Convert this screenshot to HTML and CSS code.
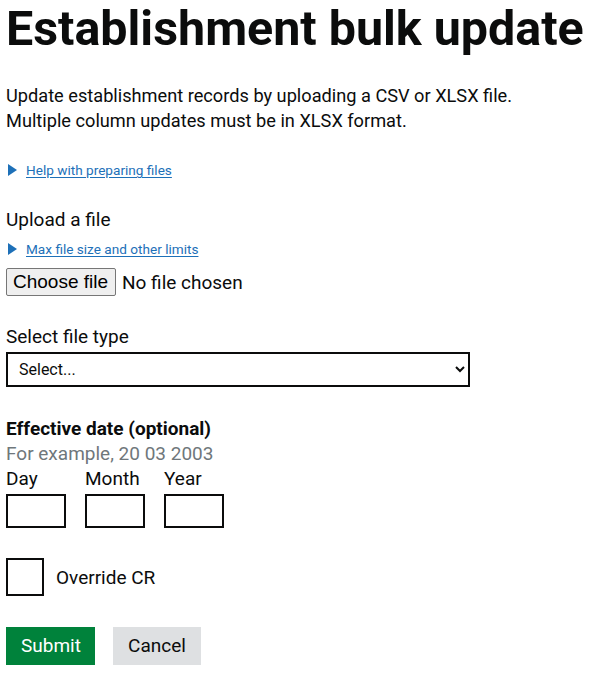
FILE: index.html
```html
<!DOCTYPE html>
<html lang="en">
<head>
<meta charset="utf-8">
<title>Establishment bulk update</title>
<link rel="stylesheet" href="styles.css">
</head>
<body>
<main class="page">
  <h1 class="heading">Establishment bulk update</h1>
  <p class="intro">Update establishment records by uploading a CSV or XLSX file.<br>Multiple column updates must be in XLSX format.</p>

  <details class="details details-help">
    <summary class="summary"><span class="summary-text">Help with preparing files</span></summary>
  </details>

  <div class="group group-upload">
    <div class="label">Upload a file</div>
    <details class="details details-limits">
      <summary class="summary"><span class="summary-text">Max file size and other limits</span></summary>
    </details>
    <div class="file">
      <input class="file-input" id="file" type="file" hidden>
      <label class="file-button" for="file">Choose file</label>
      <span class="file-status">No file chosen</span>
    </div>
  </div>

  <div class="group group-type">
    <label class="label" for="type">Select file type</label>
    <select class="select" id="type">
      <option>Select...</option>
    </select>
  </div>

  <fieldset class="fieldset">
    <legend class="legend">Effective date (optional)</legend>
    <div class="hint">For example, 20 03 2003</div>
    <div class="date">
      <div class="date-item">
        <label class="label" for="day">Day</label>
        <input class="input" id="day" type="text">
      </div>
      <div class="date-item">
        <label class="label" for="month">Month</label>
        <input class="input" id="month" type="text">
      </div>
      <div class="date-item">
        <label class="label" for="year">Year</label>
        <input class="input" id="year" type="text">
      </div>
    </div>
  </fieldset>

  <div class="checkbox-row">
    <input class="checkbox" id="override" type="checkbox">
    <label class="checkbox-label" for="override">Override CR</label>
  </div>

  <div class="actions">
    <button class="button button-primary" type="submit">Submit</button>
    <button class="button button-secondary" type="button">Cancel</button>
  </div>
</main>
</body>
</html>
```
FILE: styles.css
```css
html, body {
  margin: 0;
  padding: 0;
  background: #ffffff;
}

.page {
  padding: 4px 6px 0;
  font-family: Roboto, "Liberation Sans", Arial, sans-serif;
  color: #0b0c0c;
}

.heading {
  margin: 0 0 29px;
  font-size: 48.4px;
  line-height: 50px;
  font-weight: 700;
}

.intro {
  margin: 0 0 27px;
  font-size: 18.2px;
  line-height: 25px;
}

.details {
  margin: 0;
}

.summary {
  display: block;
  list-style: none;
  position: relative;
  padding-left: 20px;
  font-size: 13.6px;
  line-height: 20px;
  color: #1d70b8;
  cursor: pointer;
}

.summary::-webkit-details-marker {
  display: none;
}

.summary::before {
  content: "";
  position: absolute;
  left: 2px;
  top: 4px;
  width: 0;
  height: 0;
  border-style: solid;
  border-color: transparent;
  border-left-color: #1d70b8;
  border-width: 6px 0 6px 9px;
}

.summary-text {
  text-decoration: underline;
  text-underline-offset: 2px;
}

.group-upload {
  margin-top: 27px;
}

.label {
  display: block;
  font-size: 19px;
  line-height: 25px;
}

.details-limits {
  margin-top: 7px;
}

.file {
  display: flex;
  align-items: center;
  gap: 6px;
  margin-top: 9px;
  height: 28px;
}

.file-button {
  box-sizing: border-box;
  display: flex;
  align-items: center;
  width: 110px;
  height: 28px;
  padding: 0 6px;
  font-family: "Liberation Sans", Arial, sans-serif;
  font-size: 19px;
  color: #000000;
  background: #efefef;
  border: 1px solid #767676;
  border-radius: 2px;
  cursor: pointer;
}

.file-status {
  font-size: 19px;
  line-height: 25px;
}

.group-type {
  margin-top: 28px;
}

.select {
  display: block;
  margin-top: 3px;
  width: 464px;
  height: 35px;
  padding: 0 4px 0 7px;
  font-family: Roboto, "Liberation Sans", Arial, sans-serif;
  font-size: 16px;
  color: #0b0c0c;
  background: #ffffff;
  border: 2px solid #0b0c0c;
  border-radius: 0;
}

.fieldset {
  margin: 29px 0 0;
  padding: 0;
  border: 0;
  min-width: 0;
}

.legend {
  padding: 0;
  font-size: 19px;
  line-height: 25px;
  font-weight: 700;
}

.hint {
  font-size: 19px;
  line-height: 25px;
  color: #6f777b;
}

.date {
  display: flex;
  gap: 19px;
}

.date-item {
  display: flex;
  flex-direction: column;
  gap: 3px;
}

.input {
  box-sizing: border-box;
  width: 60px;
  height: 34px;
  margin: 0;
  padding: 4px;
  font-family: Roboto, "Liberation Sans", Arial, sans-serif;
  font-size: 19px;
  border: 2px solid #0b0c0c;
  border-radius: 0;
}

.checkbox-row {
  display: flex;
  align-items: center;
  gap: 12px;
  margin-top: 30px;
}

.checkbox {
  appearance: none;
  -webkit-appearance: none;
  box-sizing: border-box;
  width: 38px;
  height: 38px;
  margin: 0;
  border: 2px solid #0b0c0c;
  background: #ffffff;
}

.checkbox-label {
  font-size: 19px;
  line-height: 25px;
}

.actions {
  display: flex;
  gap: 18px;
  margin-top: 31px;
}

.button {
  box-sizing: border-box;
  height: 38px;
  margin: 0;
  padding: 0 15px;
  font-family: Roboto, "Liberation Sans", Arial, sans-serif;
  font-size: 19px;
  line-height: 38px;
  border: 0;
  border-radius: 0;
  cursor: pointer;
}

.button-primary {
  width: 89px;
  color: #ffffff;
  background: #00823b;
  box-shadow: 0 2px 0 #003618;
}

.button-secondary {
  width: 88px;
  color: #0b0c0c;
  background: #dee0e2;
  box-shadow: 0 2px 0 #b1b4b6;
}
```
